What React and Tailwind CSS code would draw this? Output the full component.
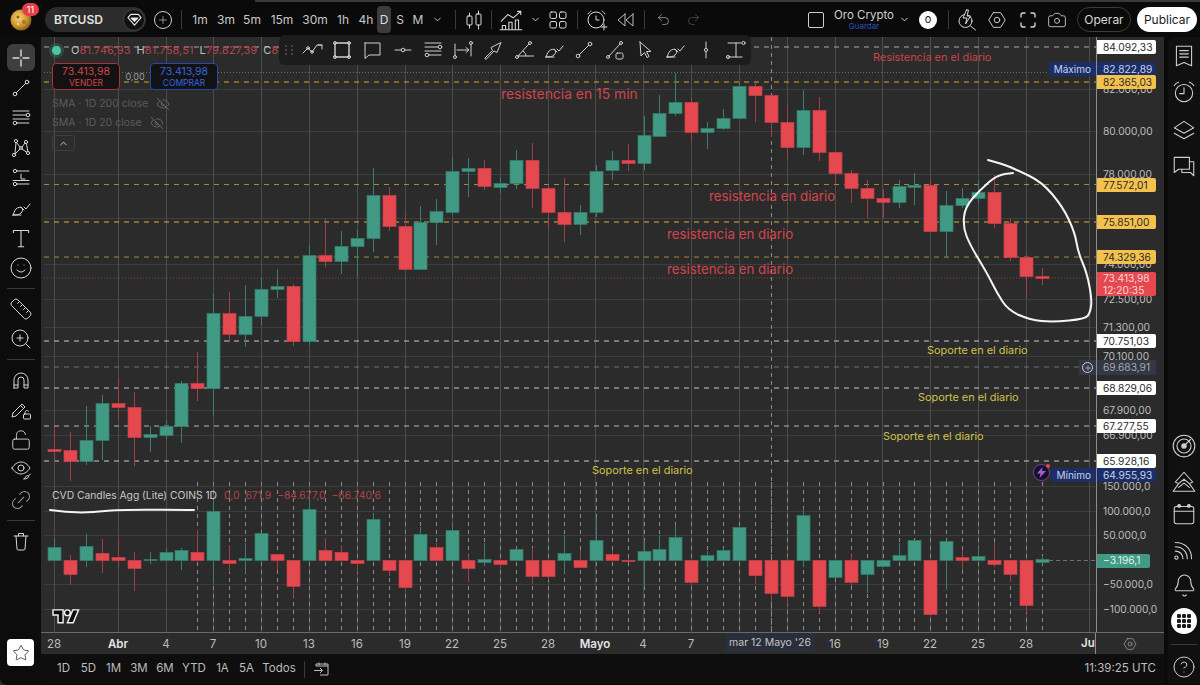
import { Bell, Camera, ChevronDown, ChevronUp, CircleHelp, EyeOff, Link2, LockOpen, Plus, Redo2, Ruler, Smile, Star, Undo2, ZoomIn } from 'lucide-react';

const stepX = 15.934;
const cx = (i) => Math.round(54 + stepX * i) + 0.5;

// wickTop, wickBottom, bodyTop, bodyBottom, colour
const candles = [
  [427, 462, 449, 451, 'r'], [432, 481, 450, 461, 'r'], [406, 465, 440, 461, 'g'], [395, 460, 403, 440, 'g'],
  [378, 420, 403, 407, 'r'], [392, 466, 407, 437, 'r'], [426, 452, 434, 437, 'g'], [420, 439, 426, 435, 'g'],
  [381, 443, 383, 426, 'g'], [352, 401, 383, 388, 'r'], [294, 415, 313, 388, 'g'], [292, 342, 313, 334, 'r'],
  [285, 347, 316, 334, 'g'], [278, 325, 289, 316, 'g'], [269, 298, 286, 289, 'g'], [284, 346, 286, 341, 'r'],
  [245, 345, 255, 341, 'g'], [218, 267, 255, 261, 'r'], [231, 274, 246, 261, 'g'], [230, 277, 238, 246, 'g'],
  [168, 252, 195, 238, 'g'], [187, 231, 195, 226, 'r'], [213, 270, 226, 269, 'r'], [206, 270, 222, 269, 'g'],
  [199, 245, 211, 222, 'g'], [157, 215, 171, 212, 'g'], [158, 197, 168, 171, 'g'], [160, 190, 168, 186, 'r'],
  [177, 193, 183, 187, 'g'], [150, 189, 160, 183, 'g'], [143, 208, 160, 188, 'r'], [186, 227, 188, 212, 'r'],
  [178, 242, 212, 224, 'r'], [205, 235, 212, 224, 'g'], [165, 217, 171, 212, 'g'], [151, 180, 160, 170, 'g'],
  [144, 171, 160, 163, 'r'], [116, 170, 135, 163, 'g'], [95, 136, 113, 136, 'g'], [73, 116, 102, 113, 'g'],
  [97, 142, 102, 132, 'r'], [122, 149, 128, 132, 'g'], [109, 130, 118, 128, 'g'], [82, 118, 86, 118, 'g'],
  [83, 122, 86, 95, 'r'], [95, 137, 95, 122, 'r'], [105, 159, 122, 147, 'r'], [90, 155, 110, 147, 'g'],
  [97, 161, 110, 152, 'r'], [152, 183, 152, 173, 'r'], [170, 203, 173, 188, 'r'], [180, 218, 188, 198, 'r'],
  [189, 218, 198, 202, 'r'], [180, 208, 186, 202, 'g'], [173, 205, 185, 187, 'g'], [179, 233, 185, 231, 'r'],
  [191, 258, 205, 231, 'g'], [188, 208, 198, 205, 'g'], [180, 203, 192, 198, 'g'], [175, 228, 192, 223, 'r'],
  [218, 261, 223, 257, 'r'], [254, 299, 257, 276, 'r'], [268, 285, 276, 278, 'r'],
];

const volume = [
  [538, 560, 547, 560, 'g'], [555, 585, 560, 574, 'r'], [534, 567, 546, 560, 'g'], [539, 573, 553, 560, 'r'],
  [539, 567, 557, 560, 'r'], [552, 591, 560, 568, 'r'], [552, 564, 559, 560, 'g'], [548, 560, 552, 560, 'g'],
  [548, 570, 550, 560, 'g'], [530, 560, 552, 560, 'r'], [500, 583, 511, 560, 'g'], [545, 572, 560, 563, 'r'],
  [543, 573, 558, 560, 'g'], [533, 560, 533, 560, 'g'], [554, 570, 554, 560, 'r'], [560, 597, 560, 586, 'r'],
  [497, 560, 509, 560, 'g'], [538, 560, 550, 560, 'r'], [545, 560, 552, 560, 'r'], [560, 573, 560, 563, 'r'],
  [513, 560, 519, 560, 'g'], [560, 576, 560, 570, 'r'], [560, 590, 560, 587, 'r'], [527, 560, 534, 560, 'g'],
  [543, 560, 547, 560, 'r'], [522, 560, 530, 560, 'g'], [555, 582, 560, 568, 'r'], [543, 566, 559, 562, 'g'],
  [560, 568, 560, 564, 'r'], [549, 560, 549, 560, 'g'], [548, 584, 560, 576, 'r'], [560, 580, 560, 576, 'r'],
  [535, 573, 553, 560, 'g'], [550, 560, 560, 567, 'r'], [517, 560, 540, 560, 'g'], [550, 560, 554, 560, 'r'],
  [558, 562, 560, 561, 'r'], [540, 587, 551, 560, 'g'], [535, 560, 549, 560, 'g'], [525, 560, 537, 560, 'g'],
  [560, 587, 560, 582, 'r'], [551, 567, 555, 560, 'g'], [548, 560, 550, 560, 'g'], [527, 560, 527, 560, 'g'],
  [560, 584, 560, 575, 'r'], [560, 602, 560, 593, 'r'], [557, 605, 560, 596, 'r'], [508, 567, 515, 560, 'g'],
  [560, 613, 560, 606, 'r'], [560, 577, 560, 577, 'g'], [555, 586, 560, 582, 'r'], [560, 593, 560, 574, 'g'],
  [560, 566, 560, 566, 'g'], [543, 560, 555, 560, 'g'], [540, 560, 540, 560, 'g'], [560, 614, 560, 614, 'r'],
  [541, 590, 541, 560, 'g'], [550, 570, 557, 560, 'r'], [547, 560, 556, 560, 'g'], [542, 567, 560, 564, 'r'],
  [560, 582, 560, 574, 'r'], [560, 613, 560, 605, 'r'], [556, 564, 559, 562, 'g'],
];

const vLines = [54, 118, 166, 213, 261, 309, 357, 405, 452, 500, 548, 595, 643, 691, 739, 787, 835, 882, 930, 978, 1026, 1089];
const hLines = [89, 131, 174, 218, 264, 299, 327, 356, 410, 435, 486, 511, 535, 584, 609];

const levels = [
  { y: 47, color: '#a8a8a8', dash: '5 5' },
  { y: 72.5, color: '#6a6a6a', dash: '1 2' },
  { y: 82, color: '#d9a92f', dash: '5 5' },
  { y: 184.5, color: '#a38a3a', dash: '5 5' },
  { y: 222, color: '#dcae3a', dash: '5 5' },
  { y: 257, color: '#a38a3a', dash: '5 5' },
  { y: 278, color: '#8a3f45', dash: '1 2' },
  { y: 341, color: '#c9c9c9', dash: '5 5' },
  { y: 367, color: '#707070', dash: '5 5' },
  { y: 388, color: '#c9c9c9', dash: '5 5' },
  { y: 426, color: '#b5b5b5', dash: '5 5' },
  { y: 461, color: '#c9c9c9', dash: '5 5' },
];

const notes = [
  { x: 873, y: 57, text: 'Resistencia en el diario', cls: 'text-[10.9px] text-[#c8444c]' },
  { x: 501, y: 95, text: 'resistencia en 15 min', cls: 'text-[13.9px] text-[#d2454d]' },
  { x: 709, y: 197, text: 'resistencia en diario', cls: 'text-[13.3px] text-[#d2454d]' },
  { x: 667, y: 235, text: 'resistencia en diario', cls: 'text-[13.3px] text-[#d2454d]' },
  { x: 667, y: 270, text: 'resistencia en diario', cls: 'text-[13.3px] text-[#d2454d]' },
  { x: 927, y: 350, text: 'Soporte en el diario', cls: 'text-[10.9px] text-[#cfc24a]' },
  { x: 918, y: 397, text: 'Soporte en el diario', cls: 'text-[10.9px] text-[#cfc24a]' },
  { x: 883, y: 436, text: 'Soporte en el diario', cls: 'text-[10.9px] text-[#cfc24a]' },
  { x: 592, y: 470, text: 'Soporte en el diario', cls: 'text-[10.9px] text-[#cfc24a]' },
];

const axisPrices = [
  [89, '82.000,00'], [131, '80.000,00'], [174, '78.000,00'], [264, '74.000,00'], [299, '72.500,00'], [327, '71.300,00'],
  [356, '70.100,00'], [410, '67.900,00'], [435, '66.900,00'], [486, '150.000,0'], [511, '100.000,0'], [535, '50.000,0'],
  [584, '−50.000,0'], [609, '−100.000,0'],
];

const tagStyles = {
  white: 'bg-white text-[#2a2a2a]',
  yellow: 'bg-[#f4c24c] text-[#2a2a2a]',
  navy: 'bg-[#1b2e68] text-[#c8d2ee]',
};

const priceTags = [
  [47, '84.092,33', 'white'], [69, '82.822,89', 'navy'], [82, '82.365,03', 'yellow'], [184.5, '77.572,01', 'yellow'],
  [222, '75.851,00', 'yellow'], [257, '74.329,36', 'yellow'], [341, '70.751,03', 'white'], [388, '68.829,06', 'white'],
  [426, '67.277,55', 'white'], [461, '65.928,16', 'white'], [474.5, '64.955,93', 'navy'],
];

const dates = [
  [54, '28'], [118, 'Abr', true], [166, '4'], [213, '7'], [261, '10'], [309, '13'], [357, '16'], [405, '19'], [452, '22'],
  [500, '25'], [548, '28'], [595, 'Mayo', true], [643, '4'], [691, '7'], [835, '16'], [883, '19'], [930, '22'], [978, '25'], [1026, '28'],
];

const intervals = [
  ['1m', 'w-[26px]'], ['3m', 'w-[26px]'], ['5m', 'w-[26px]'], ['15m', 'w-[34px]'], ['30m', 'w-[32px]'], ['1h', 'w-[24px]'], ['4h', 'w-[22px]'],
];

const ranges = [
  ['1D', 'w-[25px]'], ['5D', 'w-[25px]'], ['1M', 'w-[25px]'], ['3M', 'w-[26px]'], ['6M', 'w-[26px]'], ['YTD', 'w-[32px]'], ['1A', 'w-[25px]'], ['5A', 'w-[23px]'], ['Todos', 'w-[42px]'],
];

const circlePts = [
  [988, 160], [1003, 164], [1017, 170], [1042, 182], [1063, 207], [1075, 233], [1078, 252], [1087, 273], [1092, 300], [1090, 313], [1085, 319],
  [1053, 322], [1030, 320], [1008, 310], [997, 293], [987, 273], [970, 245], [963, 227], [965, 207], [980, 190], [997, 175], [1013, 173],
];

const smooth = (pts) => {
  let d = `M${pts[0][0]} ${pts[0][1]}`;
  for (let i = 1; i < pts.length - 1; i++) {
    const mx = (pts[i][0] + pts[i + 1][0]) / 2;
    const my = (pts[i][1] + pts[i + 1][1]) / 2;
    d += ` Q${pts[i][0]} ${pts[i][1]} ${mx} ${my}`;
  }
  const last = pts[pts.length - 1];
  return `${d} L${last[0]} ${last[1]}`;
};

function Ico({ children, size = 24, className = '' }) {
  return (
    <svg width={size} height={size} viewBox="0 0 24 24" fill="none" stroke="currentColor" strokeWidth="1" strokeLinecap="round" strokeLinejoin="round" className={`shrink-0 ${className}`}>
      {children}
    </svg>
  );
}

const IconLine = () => (
  <Ico><circle cx="6" cy="18" r="1.8" /><circle cx="18" cy="6" r="1.8" /><path d="M7.3 16.7 16.7 7.3" /></Ico>
);
const IconFib = () => (
  <Ico><path d="M4 5h16M4 9h13M4 13h16M8 17h12" /><circle cx="19" cy="9" r="1.8" /><circle cx="6" cy="17" r="1.8" /></Ico>
);
const IconPattern = () => (
  <Ico>
    <circle cx="7" cy="5" r="1.6" /><circle cx="17" cy="6" r="1.6" /><circle cx="5" cy="19" r="1.6" /><circle cx="19" cy="17" r="1.6" /><circle cx="12" cy="12" r="1.4" />
    <path d="M7.5 6.5 11 11M16 7l-3 4M6 17.500 7 6.500M11 13l-5 5M13 13l5 3.500M17.500 7.500l1.300 8" />
  </Ico>
);
const IconPosition = () => (
  <Ico>
    <circle cx="6" cy="5" r="1.7" /><circle cx="6" cy="18" r="1.7" />
    <path d="M8 5h12M12 8v5h4M4 14.500h16M8 18h12" />
  </Ico>
);
const IconBrush = () => (
  <Ico><path d="M4 19c1-1 1-4 3-6 2-2 5-2 6-1s1 3-1 5-5 2-8 2Z" /><path d="M12 11l3 3M15 11l2 2 4-5M4 19h8" /></Ico>
);
const IconText = () => (
  <Ico size={26}><path d="M5 5h14M12 5v15M9.500 20h5M5 5v2M19 5v2" /></Ico>
);
const IconMagnet = () => (
  <Ico><path d="M5 20v-8a7 7 0 0 1 14 0v8h-4v-8a3 3 0 0 0-6 0v8H5Z" /><path d="M5 17h4M15 17h4" /></Ico>
);
const IconPencilLock = () => (
  <Ico>
    <path d="m4 15 9-9 3 3-9 9-4 1 1-4Z" /><path d="m11.500 7.500 3 3" />
    <rect x="14.500" y="16" width="7" height="5" rx="1" /><path d="M16 16v-1.500a2 2 0 0 1 3.500-1.300" />
  </Ico>
);
const IconEyeBrush = () => (
  <Ico>
    <path d="M3 10c2.500-4 5.500-6 9-6s6.500 2 9 6c-2 3.500-5.500 6-9 6s-7-2.500-9-6Z" /><circle cx="12" cy="10" r="3" />
    <path d="M15 21c1 0 1-2 2.500-3s2.500 0 2 1-2 2-4.500 2ZM19.500 18l2-2" />
  </Ico>
);
const IconTrash = () => (
  <Ico><path d="M5 7h14M7 7l1 13c0 .5.500 1 1 1h6c.5 0 1-.5 1-1l1-13M9.500 7V4.500h5V7" /></Ico>
);
const IconList = () => (
  <Ico size={26}><path d="M5 3h14v18l-7-3-7 3V3Z" /><path d="M8 7h8M8 10h8M8 13h8" /></Ico>
);
const IconAlarm = () => (
  <Ico size={26}><circle cx="12" cy="13" r="8" /><path d="M12 8v5.500H8M3 6c1-1.500 2-2.500 4-3M21 6c-1-1.500-2-2.500-4-3" /></Ico>
);
const IconLayers = () => (
  <Ico size={26}><path d="m12 4 9 6-9 5-9-5 9-6Z" /><path d="m3 15 9 5 9-5" /></Ico>
);
const IconChat = () => (
  <Ico size={26}><path d="M3 4h14v11H7l-4 3V4Z" /><path d="M17 8h4v13l-3-3h-8v-3" /></Ico>
);
const IconRadar = () => (
  <Ico size={26}><circle cx="12" cy="12" r="10" /><circle cx="12" cy="12" r="6.500" /><circle cx="12" cy="12" r="2" fill="currentColor" /><path d="m12 12 6-6" /></Ico>
);
const IconPeaks = () => (
  <Ico size={26}><path d="m12 3 8 9-3 1.500-5-4-5 4L4 12l8-9Z" /><path d="m7 13.500-5 7h20l-5-7M7 17l5-4 5 4" /></Ico>
);
const IconCalendar = () => (
  <Ico size={26}><rect x="3" y="5" width="18" height="16" rx="2" /><path d="M3 9.500h18" /><circle cx="7.500" cy="4.500" r="1.300" fill="currentColor" /><circle cx="16.500" cy="4.500" r="1.300" fill="currentColor" /></Ico>
);
const IconWaves = () => (
  <Ico size={26}><circle cx="5" cy="19" r="1.500" /><path d="M4 13c4 0 7 3 7 7M4 9c6.500 0 11 4.500 11 11M4 5c9 0 15 6 15 15" /></Ico>
);
const IconApps = () => (
  <svg width="20" height="20" viewBox="0 0 20 20" fill="#1a1a1a" className="shrink-0">
    {[3, 8, 13].map((y) => [3, 8, 13].map((x) => <rect key={`${x}-${y}`} x={x} y={y} width="4" height="4" rx="1.200" />))}
  </svg>
);
const IconHexSmall = ({ size = 22 }) => (
  <Ico size={size}><path d="M8 4h8l5 8-5 8H8l-5-8 5-8Z" /><circle cx="12" cy="12" r="3" /></Ico>
);
const IconCandles = () => (
  <Ico><rect x="5" y="8" width="5" height="9" rx="1" /><rect x="14" y="6" width="5" height="11" rx="1" /><path d="M7.500 5v3M7.500 17v3M16.500 3v3M16.500 17v4" /></Ico>
);
const IconCompare = () => (
  <Ico size={26}><path d="m3 13 6-6 5 3 7-6M21 4v3M21 4h-3" /><path d="M4 20v-3h3v3M10 20v-6h3v6M16 20v-8h3v8M2 21h20" /></Ico>
);
const IconGrid = () => (
  <Ico><rect x="4" y="4" width="6.500" height="6.500" rx="1.500" /><rect x="13.500" y="4" width="6.500" height="6.500" rx="1.500" /><rect x="4" y="13.500" width="6.500" height="6.500" rx="1.500" /><rect x="13.500" y="13.500" width="6.500" height="6.500" rx="1.500" /></Ico>
);
const IconReplayAlarm = () => (
  <Ico>
    <circle cx="11" cy="12" r="8" /><path d="M11 8v4h3M3 6c1-1.500 2-2.500 3-3M17 3c1 .5 2 1.500 3 3" />
    <path d="M16 19h6M19 16v6" />
  </Ico>
);
const IconRewind = () => (
  <Ico><path d="M11 6v12l-7-6 7-6ZM19 6v12l-7-6 7-6Z" /></Ico>
);
const IconBolt = () => (
  <Ico><circle cx="10.500" cy="13" r="6.500" /><path d="m15.500 18 5 4" /><path d="M11.500 2 8 10h4l-1.500 6 5-8h-3.500l1.500-6h-2Z" fill="#0a0a0a" /></Ico>
);
const IconFull = () => (
  <Ico><path d="M5 9V7a2 2 0 0 1 2-2h2M15 5h2a2 2 0 0 1 2 2v2M19 15v2a2 2 0 0 1-2 2h-2M9 19H7a2 2 0 0 1-2-2v-2" strokeWidth="1.300" /></Ico>
);
const IconDiamond = () => (
  <svg width="15" height="15" viewBox="0 0 16 16" fill="none" stroke="#e8e8e8" strokeWidth="1.200" strokeLinejoin="round" className="shrink-0">
    <path d="M4 2.500h8l3 3.500-7 8-7-8 3-3.500Z" /><path d="M4.500 6.500h7L8 10 4.500 6.500Z" fill="#e8e8e8" />
  </svg>
);

const drawTools = [
  <Ico key="a"><path d="m3 15 5-5 4 4 5-7h5M18 7h4v4" /><circle cx="8" cy="10" r="1.300" /><circle cx="12" cy="14" r="1.300" /></Ico>,
  <Ico key="b"><rect x="5" y="5" width="14" height="14" strokeWidth="1.400" /><circle cx="5" cy="5" r="1.500" /><circle cx="19" cy="5" r="1.500" /><circle cx="5" cy="19" r="1.500" /><circle cx="19" cy="19" r="1.500" /></Ico>,
  <Ico key="c"><path d="M5 5h15v12H9l-4 3.500V5Z" /></Ico>,
  <Ico key="d"><path d="M4 12h6M14 12h6" /><circle cx="12" cy="12" r="1.800" /></Ico>,
  <IconFib key="e" />,
  <Ico key="f"><path d="M4 6v12M20 6v12M6 12h11M15 9.500 18 12l-3 2.500" /><circle cx="4" cy="19" r="1.500" /><circle cx="20" cy="5" r="1.500" /></Ico>,
  <Ico key="g"><path d="m4 20 7.500-7.500-1.500-3 10-5-4 10-3-1.500L5.500 21Z" /></Ico>,
  <Ico key="h"><circle cx="5" cy="19" r="1.500" /><circle cx="18" cy="5" r="1.500" /><path d="M6.500 18h15M6 18 17 6M14 18c0-2-1-3.500-3-5" /></Ico>,
  <IconBrush key="i" />,
  <IconLine key="j" />,
  <Ico key="k"><circle cx="5" cy="19" r="1.500" /><circle cx="18" cy="5" r="1.500" /><path d="M6 18 17 6" /><rect x="13" y="15" width="7" height="6" rx="1.500" /></Ico>,
  <Ico key="l"><path d="m7 4 1 14 3.500-3.500 2.500 5 2-1-2.500-5H18L7 4Z" /></Ico>,
  <IconBrush key="m" />,
  <Ico key="n"><path d="M12 4v16" /><circle cx="12" cy="12" r="1.600" fill="#1c1c1c" /></Ico>,
  <Ico key="o"><path d="M4 5h13M12 5v14M4 19h14" /><circle cx="19.500" cy="5" r="1.600" /><circle cx="4" cy="19" r="1.600" /></Ico>,
];

const navTop = [
  <IconLine key="0" />, <IconFib key="1" />, <IconPattern key="2" />, <IconPosition key="3" />, <IconBrush key="4" />, <IconText key="5" />,
  <Smile key="6" size={24} strokeWidth={1} />,
];

function NavBtn({ children }) {
  return <div className="flex h-[30px] w-full items-center justify-center text-[#d6d6d6]">{children}</div>;
}

function Divider() {
  return <div className="mx-auto my-[5px] h-px w-[28px] bg-[#3a3a3a]" />;
}

function LeftNav() {
  return (
    <aside className="flex w-[41px] shrink-0 flex-col bg-[#0c0c0c] pt-[7px]">
      <div className="mx-auto flex h-[27px] w-[28px] items-center justify-center rounded-md bg-[#3e3e3e] text-[#dcdcdc]">
        <svg width="20" height="20" viewBox="0 0 20 20" stroke="currentColor" strokeWidth="1.400" strokeLinecap="round"><path d="M10 2v6M10 12v6M2 10h6M12 10h6" /></svg>
      </div>
      <div className="mt-[2px]">
        {navTop.map((n, i) => <NavBtn key={i}>{n}</NavBtn>)}
      </div>
      <Divider />
      <NavBtn><Ruler size={24} strokeWidth={1} /></NavBtn>
      <NavBtn><ZoomIn size={24} strokeWidth={1} /></NavBtn>
      <Divider />
      <NavBtn><IconMagnet /></NavBtn>
      <NavBtn><IconPencilLock /></NavBtn>
      <NavBtn><LockOpen size={22} strokeWidth={1} /></NavBtn>
      <NavBtn><IconEyeBrush /></NavBtn>
      <NavBtn><Link2 size={24} strokeWidth={1} className="-rotate-45 text-[#9a9a9a]" /></NavBtn>
      <Divider />
      <NavBtn><IconTrash /></NavBtn>
      <div className="mx-auto mt-auto mb-[18px] flex h-[27px] w-[27px] items-center justify-center rounded-[4px] bg-white text-[#222]">
        <Star size={18} strokeWidth={1} />
      </div>
    </aside>
  );
}

function Sep() {
  return <div className="mx-[8px] h-[19px] w-px shrink-0 bg-[#3a3a3a]" />;
}

function TopBar() {
  return (
    <header className="flex h-[35px] shrink-0 items-center bg-[#0a0a0a] text-[#d8d8d8]">
      <div className="relative ml-[10px] h-[24px] w-[24px] shrink-0">
        <svg width="24" height="24" viewBox="0 0 24 24">
          <defs>
            <radialGradient id="coin" cx="40%" cy="40%" r="70%">
              <stop offset="0%" stopColor="#f7d774" /><stop offset="60%" stopColor="#c98f2a" /><stop offset="100%" stopColor="#6b4a16" />
            </radialGradient>
          </defs>
          <circle cx="11" cy="12" r="10.500" fill="url(#coin)" />
          <circle cx="8" cy="9" r="1.500" fill="#8a5f1c" /><circle cx="14" cy="14" r="2" fill="#a87722" /><circle cx="8" cy="16" r="1.200" fill="#f3d98a" />
        </svg>
        <span className="absolute top-[-5px] left-[12px] flex h-[13px] w-[17px] items-center justify-center rounded-full bg-[#e5404a] text-[9px] leading-none text-white">11</span>
      </div>
      <div className="ml-[11px] flex h-[25px] w-[101px] shrink-0 items-center justify-between rounded-full bg-[#2c2c2c] pr-[1px] pl-[9px]">
        <span className="text-[12px] font-semibold text-[#e4e4e4]">BTCUSD</span>
        <span className="flex h-[22px] w-[22px] items-center justify-center rounded-full border border-[#444] bg-[#111]"><IconDiamond /></span>
      </div>
      <span className="ml-[8px] flex h-[18px] w-[18px] shrink-0 items-center justify-center rounded-full border border-[#cfcfcf]"><Plus size={12} strokeWidth={1.200} /></span>
      <div className="ml-[9px] h-[19px] w-px shrink-0 bg-[#3a3a3a]" />
      <div className="ml-[5px] flex items-center text-[12px] text-[#c8c8c8]">
        {intervals.map(([t, w]) => <span key={t} className={`${w} text-center`}>{t}</span>)}
        <span className="flex h-[27px] w-[14px] items-center justify-center rounded-[4px] bg-[#3c3c3c] text-[#dcdcdc]">D</span>
        <span className="w-[18px] text-center">S</span>
        <span className="w-[18px] text-center">M</span>
        <span className="flex w-[20px] justify-center"><ChevronDown size={11} /></span>
      </div>
      <Sep />
      <div className="flex w-[20px] justify-center"><IconCandles /></div>
      <div className="ml-[7px] h-[19px] w-px shrink-0 bg-[#3a3a3a]" />
      <div className="ml-[6px] flex w-[26px] justify-center"><IconCompare /></div>
      <div className="ml-[4px] flex w-[14px] justify-center"><ChevronDown size={11} /></div>
      <div className="ml-[4px] flex w-[24px] justify-center"><IconGrid /></div>
      <div className="ml-[7px] h-[19px] w-px shrink-0 bg-[#3a3a3a]" />
      <div className="ml-[7px] flex w-[24px] justify-center"><IconReplayAlarm /></div>
      <div className="ml-[5px] flex w-[24px] justify-center text-[#bcbcbc]"><IconRewind /></div>
      <div className="ml-[6px] h-[19px] w-px shrink-0 bg-[#3a3a3a]" />
      <div className="ml-[8px] flex w-[20px] justify-center text-[#aaa]"><Undo2 size={15} strokeWidth={1.200} /></div>
      <div className="ml-[10px] flex w-[20px] justify-center text-[#555]"><Redo2 size={15} strokeWidth={1.200} /></div>
      <div className="ml-[105px] h-[16px] w-[16px] shrink-0 rounded-[2px] border border-[#cfcfcf]" />
      <div className="ml-[10px] flex w-[60px] flex-col items-center whitespace-nowrap">
        <span className="text-[11.500px] leading-[13px] text-[#cfcfcf]">Oro Crypto</span>
        <span className="text-[8px] leading-[9px] text-[#2c4fc4]">Guardar</span>
      </div>
      <div className="flex w-[21px] justify-center"><ChevronDown size={11} /></div>
      <span className="ml-[4px] flex h-[18px] w-[18px] shrink-0 items-center justify-center rounded-full bg-white text-[11px] text-[#222]">o</span>
      <div className="ml-[11px] h-[19px] w-px shrink-0 bg-[#3a3a3a]" />
      <div className="ml-[6px] flex w-[24px] justify-center"><IconBolt /></div>
      <div className="ml-[6px] flex w-[24px] justify-center"><IconHexSmall /></div>
      <div className="ml-[7px] flex w-[24px] justify-center"><IconFull /></div>
      <div className="ml-[5px] flex w-[24px] justify-center"><Camera size={20} strokeWidth={1} /></div>
      <span className="ml-[8px] flex h-[25px] w-[54px] shrink-0 items-center justify-center rounded-full border border-[#3c3c3c] text-[12px] text-[#d8d8d8]">Operar</span>
      <span className="ml-[6px] flex h-[25px] w-[60px] shrink-0 items-center justify-center rounded-full bg-white text-[12px] text-[#1a1a1a]">Publicar</span>
    </header>
  );
}

function CandleSet({ data, showDash }) {
  return data.map(([wt, wb, bt, bb, c], i) => {
    const x = cx(i);
    const fill = c === 'g' ? '#419a83' : '#e5484f';
    const edge = c === 'g' ? '#357f6d' : '#c9414a';
    const wick = c === 'g' ? '#3a7f6e' : '#a03f46';
    return (
      <g key={i}>
        {showDash && i >= 9 && <path d={`M${x} 482V632`} stroke="#8a8a8a" strokeDasharray="4 4" />}
        <path d={`M${x} ${wt}V${wb}`} stroke={wick} />
        <rect x={x - 6.5} y={bt + 0.5} width="13" height={Math.max(bb - bt, 1)} fill={fill} stroke={edge} strokeWidth="0.7" />
      </g>
    );
  });
}

function ChartDrawing() {
  return (
    <svg className="absolute inset-0 h-full w-full" viewBox="41 37 1055 595" preserveAspectRatio="none">
      {hLines.map((y) => <path key={y} d={`M44 ${y}.5H1096`} stroke="#3d3d3d" />)}
      {vLines.map((x) => <path key={x} d={`M${x}.5 37V632`} stroke="#4c4c4c" />)}
      <path d="M771.500 37V632" stroke="#8a8a8a" strokeDasharray="4 4" />
      {levels.map((l) => <path key={l.y} d={`M44 ${l.y}H1096`} stroke={l.color} strokeDasharray={l.dash} />)}
      <path d="M1042 560.500H1096" stroke="#6f6f6f" strokeDasharray="4 3" />
      <CandleSet data={candles} />
      <CandleSet data={volume} showDash />
      <path d={smooth(circlePts)} fill="none" stroke="#f4f4f4" strokeWidth="2" strokeLinecap="round" strokeLinejoin="round" />
      <path d="M50 510C70 513 88 513 105 511S150 510 194 510" fill="none" stroke="#f4f4f4" strokeWidth="2" strokeLinecap="round" />
      <g transform="translate(53 607) scale(0.72)" fill="#0c0c0c" stroke="#f2f2f2" strokeWidth="2">
        <path d="M14 22H7V11H0V4h14v18ZM28 22h-8l7.500-18h8L28 22Z" /><circle cx="20" cy="8" r="4" />
      </g>
    </svg>
  );
}

function DrawToolbar() {
  return (
    <div className="absolute top-[-2px] left-[238px] z-20 flex h-[30px] w-[472px] items-center rounded-md bg-[#1c1c1c] pl-[4px] text-[#cfcfcf]">
      <div className="grid w-[14px] grid-cols-2 gap-[2px] px-[2px]">
        {[0, 1, 2, 3, 4, 5].map((d) => <span key={d} className="h-[2px] w-[2px] rounded-full bg-[#555]" />)}
      </div>
      <div className="flex">
        {drawTools.map((t, i) => <span key={i} className="flex w-[30.300px] justify-center">{t}</span>)}
      </div>
    </div>
  );
}

function Legend() {
  return (
    <div className="absolute top-[6px] left-[11px] z-10 flex flex-col items-start">
      <div className="flex h-[14px] items-center whitespace-nowrap text-[11px] tracking-[0.1px]">
        <span className="mr-[8px] h-[9px] w-[9px] rounded-full bg-[#4fc4a4] shadow-[0_0_0_3px_rgba(79,196,164,0.2)]" />
        <span className="ml-[2px] text-[#bdbdbd]">O</span><span className="text-[#b8434a]">81.746,93</span>
        <span className="ml-[6px] text-[#bdbdbd]">H</span><span className="text-[#b8434a]">81.758,51</span>
        <span className="ml-[6px] text-[#bdbdbd]">L</span><span className="text-[#b8434a]">79.827,39</span>
        <span className="ml-[6px] text-[#bdbdbd]">C</span><span className="text-[#b8434a]">8</span>
      </div>
      <div className="mt-[6px] flex items-center">
        <div className="flex h-[27px] w-[68px] flex-col items-center justify-center rounded-[4px] border border-[#a5343b] bg-[#121212] text-[#d1434b]">
          <span className="text-[10.500px] leading-[13px]">73.413,98</span>
          <span className="text-[8.500px] leading-[11px]">VENDER</span>
        </div>
        <span className="w-[30px] text-center text-[9px] text-[#9c9c9c]">0,00</span>
        <div className="flex h-[27px] w-[68px] flex-col items-center justify-center rounded-[4px] border border-[#2547b0] bg-[#121212] text-[#3564e0]">
          <span className="text-[10.500px] leading-[13px]">73.413,98</span>
          <span className="text-[8.500px] leading-[11px]">COMPRAR</span>
        </div>
      </div>
      <div className="mt-[4px] flex h-[19px] items-center text-[10.500px] text-[#5b5b5b]">
        SMA · 1D 200 close <EyeOff size={14} strokeWidth={1} className="ml-[8px] text-[#8a8a8a]" />
      </div>
      <div className="flex h-[19px] items-center text-[10.500px] text-[#5b5b5b]">
        SMA · 1D 20 close <EyeOff size={14} strokeWidth={1} className="ml-[8px] text-[#8a8a8a]" />
      </div>
      <div className="mt-[3px] flex h-[16px] w-[23px] items-center justify-center rounded-[3px] border border-[#3e3e3e] text-[#cfcfcf]">
        <ChevronUp size={11} />
      </div>
    </div>
  );
}

function PriceAxis() {
  return (
    <div className="relative w-[68px] shrink-0 border-l border-[#8c8c8c] bg-[#2b2b2b] text-[10.200px] text-[#bdbdbd]">
      {axisPrices.map(([y, t]) => (
        <span key={t} className="absolute left-[6px] leading-[14px] whitespace-nowrap" style={{ top: y - 37 - 7 }}>{t}</span>
      ))}
      {priceTags.map(([y, t, kind]) => (
        <span key={t} className={`absolute left-0 h-[14px] w-[59px] rounded-r-[2px] pl-[6px] leading-[14px] ${tagStyles[kind]}`} style={{ top: y - 37 - 7 }}>{t}</span>
      ))}
      <div className="absolute top-[235px] left-0 flex h-[24px] w-[59px] flex-col justify-center rounded-r-[2px] bg-[#e5484f] pl-[6px] leading-[12px] text-[#f7d9da]">
        <span>73.413,98</span>
        <span>12:20:35</span>
      </div>
      <div className="absolute top-[323px] left-0 flex h-[15px] w-[59px] items-center rounded-r-[2px] bg-[#333846] pl-[6px] text-[#a8a8a8]">69.683,91</div>
      <div className="absolute top-[517px] left-0 flex h-[14px] w-[53px] items-center rounded-r-[2px] bg-[#419a83] pl-[6px] text-[#e4f2ee]">−3.196,1</div>
    </div>
  );
}

function ChartArea() {
  return (
    <div className="flex min-h-0 flex-1">
      <div className="relative flex-1 bg-[#2b2b2b]">
        <ChartDrawing />
        <DrawToolbar />
        <Legend />
        {notes.map((n) => (
          <span key={n.y} className={`absolute -translate-y-1/2 leading-none whitespace-nowrap ${n.cls}`} style={{ left: n.x - 41, top: n.y - 37 }}>{n.text}</span>
        ))}
        <span className="absolute top-[25px] right-0 rounded-l-[2px] bg-[#1b2e68] px-[5px] text-[10px] leading-[14px] text-[#c8d2ee]">Máximo</span>
        <span className="absolute top-[431px] right-0 rounded-l-[2px] bg-[#1b2e68] px-[5px] text-[10px] leading-[14px] text-[#c8d2ee]">Mínimo</span>
        <span className="absolute top-[323px] right-0 flex h-[15px] w-[17px] items-center justify-center bg-[#333846]">
          <span className="flex h-[11px] w-[11px] items-center justify-center rounded-full border border-[#cfcfcf] text-[#cfcfcf]"><Plus size={8} /></span>
        </span>
        <span className="absolute top-[427px] left-[992px] flex h-[17px] w-[17px] items-center justify-center rounded-full border border-[#7a3fb5] bg-[#16101f]">
          <svg width="9" height="11" viewBox="0 0 9 11" fill="#a35ce0"><path d="M5.500 0 0 6.500h3.500L2.500 11 9 4H5l.5-4Z" /></svg>
          <span className="absolute top-[-1px] right-[-1px] h-[4px] w-[4px] rounded-full bg-[#e5484f]" />
        </span>
        <div className="absolute top-[450px] left-[11px] flex items-center whitespace-nowrap text-[10.300px] leading-[16px] text-[#c8c8c8]">
          <span>CVD Candles Agg (Lite) COINS 1D</span>
          <span className="ml-[7px] text-[#b3434a]">0,0</span>
          <span className="ml-[6px] text-[#b3434a]">671,9</span>
          <span className="ml-[6px] text-[#b3434a]">−84.677,0</span>
          <span className="ml-[6px] text-[#b3434a]">−66.740,6</span>
        </div>
      </div>
      <PriceAxis />
    </div>
  );
}

function TimeAxis() {
  return (
    <div className="relative h-[22px] shrink-0 border-t border-[#6a6a6a] bg-[#2b2b2b] text-[11.500px] text-[#bdbdbd]">
      {dates.map(([x, t, bold]) => (
        <span key={`${x}${t}`} className={`absolute top-[3px] -translate-x-1/2 leading-[16px] ${bold ? 'font-semibold text-[#e4e4e4]' : ''}`} style={{ left: x - 41 }}>{t}</span>
      ))}
      <div className="absolute top-0 left-[684px] flex h-[19px] w-[90px] items-center justify-center bg-[#2a2e3a] text-[10.500px] whitespace-nowrap text-[#c4c4c4]">mar 12 Mayo '26</div>
      <div className="absolute top-0 left-[1040px] h-[21px] w-[15px] overflow-hidden border-r border-[#8c8c8c] leading-[21px] font-semibold whitespace-nowrap text-[#e4e4e4]">Jun</div>
      <div className="absolute top-0 left-[1081px] flex h-[21px] items-center text-[#b0b0b0]"><IconHexSmall size={16} /></div>
    </div>
  );
}

function BottomBar() {
  return (
    <div className="flex h-[30px] shrink-0 items-center bg-[#0e0e0e] pl-[10px] text-[11.500px] text-[#bdbdbd]">
      {ranges.map(([t, w]) => <span key={t} className={`${w} text-center`}>{t}</span>)}
      <div className="ml-[4px] h-[17px] w-px bg-[#3a3a3a]" />
      <svg width="18" height="18" viewBox="0 0 18 18" fill="none" stroke="currentColor" className="ml-[8px] shrink-0">
        <path d="M3 6V4h12v11H7M3 6h12M6 2.500v3M12 2.500v3M1 10.500h8M7 8l2.500 2.500L7 13" />
      </svg>
      <span className="mr-[8px] ml-auto">11:39:25 UTC</span>
    </div>
  );
}

function RightNav() {
  return (
    <aside className="ml-[4px] flex w-[32px] shrink-0 flex-col items-center rounded-tl-lg bg-[#101010] text-[#cfcfcf]">
      <div className="mt-[6px] flex flex-col items-center gap-[10px]">
        <IconList />
        <IconAlarm />
        <span className="mt-[2px]"><IconLayers /></span>
        <IconChat />
      </div>
      <div className="mt-auto flex flex-col items-center gap-[10px]">
        <IconRadar />
        <IconPeaks />
        <span className="-mt-[4px]"><IconCalendar /></span>
        <IconWaves />
        <Bell size={25} strokeWidth={1} />
        <span className="flex h-[26px] w-[26px] items-center justify-center rounded-full bg-white"><IconApps /></span>
        <div className="h-px w-[26px] bg-[#3a3a3a]" />
        <span className="mb-[5px]"><CircleHelp size={24} strokeWidth={1} /></span>
      </div>
    </aside>
  );
}

export default function App() {
  return (
    <div className="h-[685px] w-[1200px] overflow-hidden bg-[#2a2a2a] font-['Inter',sans-serif]">
      <div className="flex h-full flex-col overflow-hidden rounded-bl-lg bg-[#0a0a0a]">
        <div className="ml-[255px] h-[2px] shrink-0 bg-[#3a3a3a]" />
        <TopBar />
        <div className="flex min-h-0 flex-1 pb-px">
          <LeftNav />
          <main className="flex min-w-0 flex-1 flex-col">
            <ChartArea />
            <TimeAxis />
            <BottomBar />
          </main>
          <RightNav />
        </div>
      </div>
    </div>
  );
}
